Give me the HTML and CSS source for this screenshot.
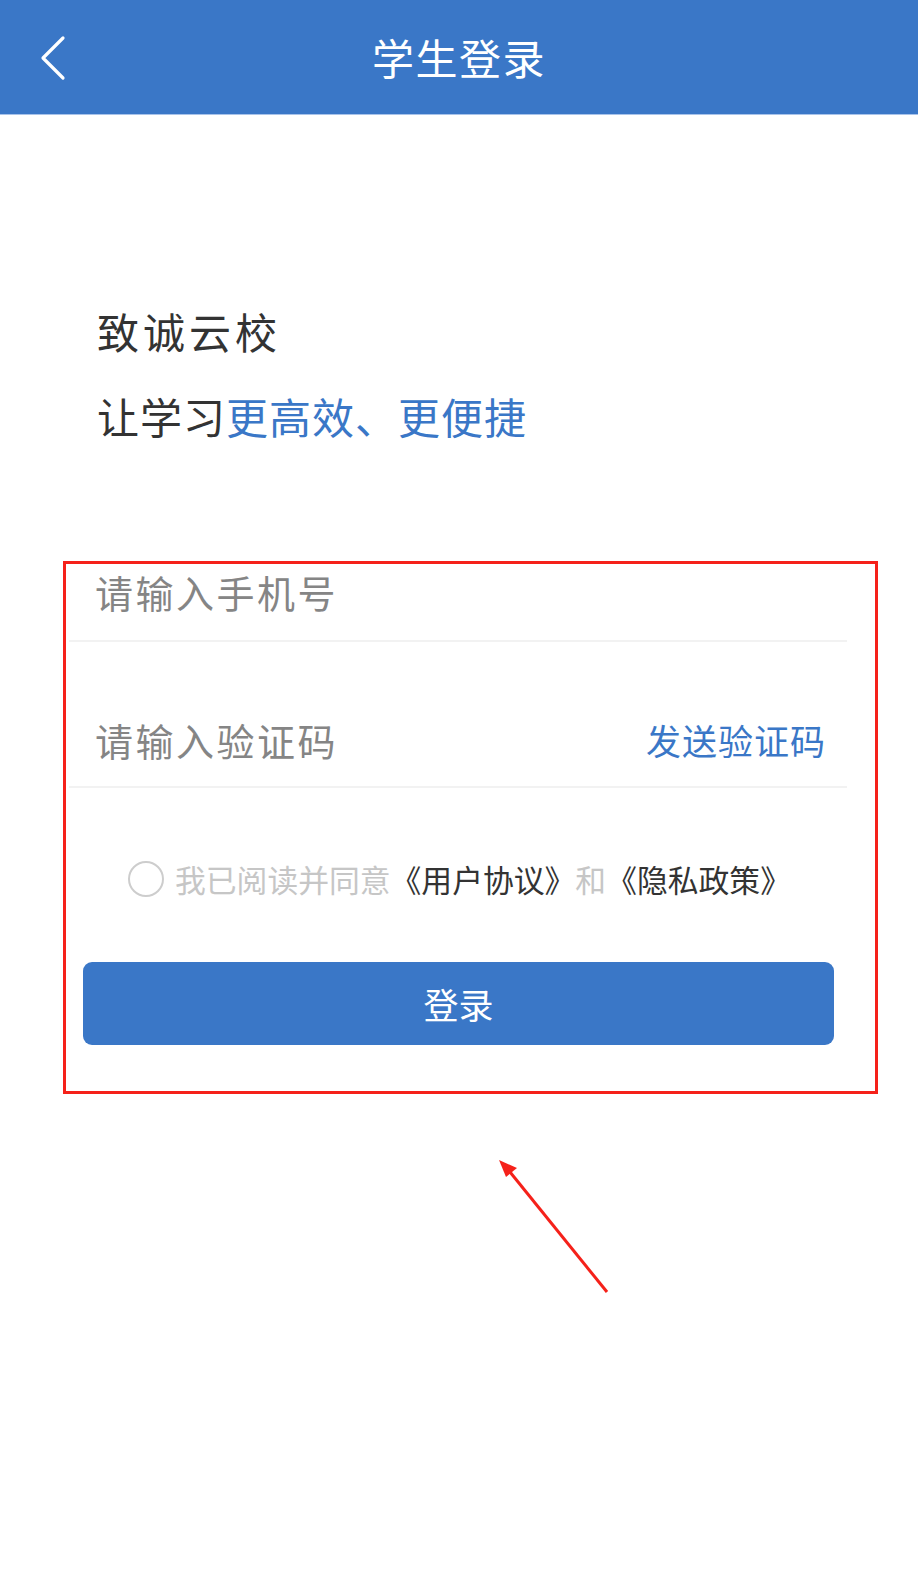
FILE: index.html
```html
<!DOCTYPE html>
<html lang="zh-CN">
<head>
<meta charset="utf-8">
<title>学生登录</title>
<link rel="stylesheet" href="styles.css">
</head>
<body>
<div class="page">
  <header class="topbar">
    <div class="back">
      <svg width="28" height="46" viewBox="0 0 28 46"><polyline points="24,3 4,23 24,43" fill="none" stroke="#fff" stroke-width="3.2" stroke-linecap="round" stroke-linejoin="round"/></svg>
    </div>
    <h1 class="title">学生登录</h1>
    <div></div>
  </header>

  <section class="intro">
    <p class="brand">致诚云校</p>
    <p class="slogan">让学习<span class="hl">更高效、更便捷</span></p>
  </section>

  <section class="box">
    <div class="form">
      <div class="field">
        <span class="ph">请输入手机号</span>
      </div>
      <div class="field field-code">
        <span class="ph">请输入验证码</span>
        <span class="send">发送验证码</span>
      </div>
      <div class="agree">
        <span class="radio"></span>
        <span class="muted">我已阅读并同意</span><span class="dark">《用户协议》</span><span class="muted">和</span><span class="dark">《隐私政策》</span>
      </div>
      <button class="login">登录</button>
    </div>
  </section>

  <svg class="arrow" width="140" height="160" viewBox="0 0 140 160">
    <line x1="127" y1="152" x2="30" y2="32" stroke="#f5211a" stroke-width="3"/>
    <polygon points="19,20 37,28 26,37" fill="#f5211a"/>
  </svg>
</div>
</body>
</html>
```

FILE: styles.css
```css
* { box-sizing: border-box; }
html, body { margin: 0; padding: 0; background: #fff; }
body {
  font-family: "Noto Sans CJK SC", "Noto Sans", sans-serif;
  color: #333;
}
.page {
  position: relative;
  width: 918px;
  height: 1574px;
  overflow: hidden;
}
.topbar {
  height: 115px;
  background: #3a77c7;
  border-bottom: 1px solid #a8c3ea;
  display: grid;
  grid-template-columns: 1fr auto 1fr;
  align-items: center;
}
.back {
  padding-left: 39px;
  display: flex;
  align-items: center;
  padding-top: 2px;
}
.back svg { display: block; }
.title {
  margin: 0;
  font-size: 42px;
  line-height: 42px;
  font-weight: 400;
  color: #fff;
  letter-spacing: 1.5px;
}
.intro {
  padding-left: 97px;
  margin-top: 195px;
}
.brand {
  margin: 0;
  font-size: 42px;
  line-height: 42px;
  letter-spacing: 4px;
  color: #333;
}
.slogan {
  margin: 43px 0 0;
  font-size: 42px;
  line-height: 42px;
  letter-spacing: 1px;
  color: #333;
}
.hl { color: #3a77c7; }
.box {
  margin: 124px 0 0 63px;
  width: 815px;
  height: 533px;
  border: 3px solid #f5211a;
}
.form {
  margin-left: 3px;
  width: 778px;
}
.field {
  height: 78px;
  padding: 9px 21px 0 26px;
  border-bottom: 2px solid #f2f2f2;
  display: flex;
  align-items: flex-start;
  justify-content: space-between;
}
.field-code {
  margin-top: 68px;
  padding-top: 11px;
}
.ph {
  font-size: 38px;
  line-height: 38px;
  letter-spacing: 2.5px;
  color: #858585;
}
.send {
  font-size: 35px;
  line-height: 38px;
  letter-spacing: 1px;
  color: #3a77c7;
}
.agree {
  margin-top: 71px;
  height: 40px;
  padding-left: 59px;
  display: flex;
  align-items: center;
  font-size: 30.8px;
  line-height: 40px;
}
.radio {
  width: 36px;
  height: 36px;
  border: 2px solid #cdcdcd;
  border-radius: 50%;
  margin-right: 11px;
  flex: none;
}
.muted { color: #c6c6c6; }
.dark { color: #333; }
.login {
  display: block;
  margin: 63px 0 0 14px;
  width: 751px;
  height: 83px;
  border: none;
  border-radius: 9px;
  background: #3a77c7;
  color: #fff;
  font-family: inherit;
  font-size: 35px;
  line-height: 35px;
  padding: 0;
}
.arrow {
  position: absolute;
  left: 480px;
  top: 1140px;
}
```
